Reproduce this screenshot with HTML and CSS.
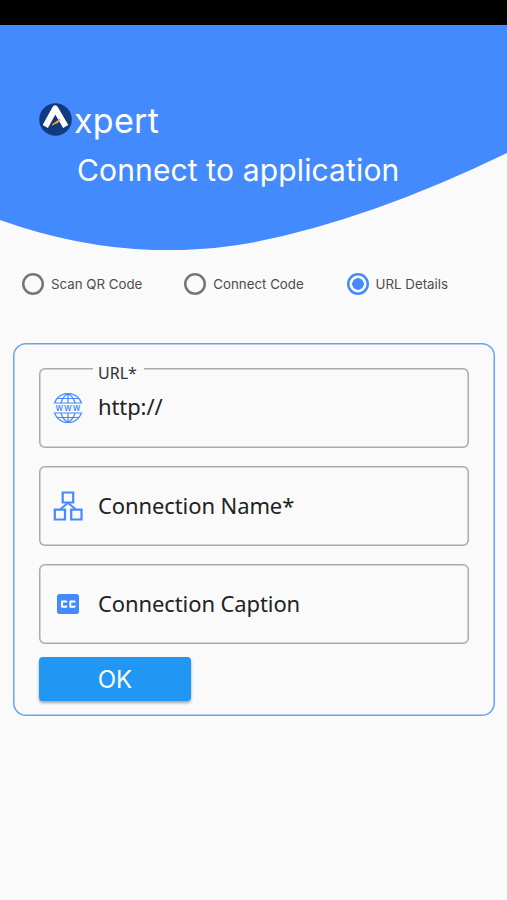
FILE: index.html
```
<!DOCTYPE html>
<html lang="en">

<head>
    <meta charset="UTF-8">
    <meta name="viewport" content="width=device-width, initial-scale=1.0">
    <title>Axpert</title>
    <link rel="stylesheet" href="styles.css">
</head>

<body>
    <div class="status-bar"></div>
    <header class="header">
        <svg class="wave" viewBox="0 0 507 225" preserveAspectRatio="none">
            <path d="M0 0V195Q127 240.500 253 217.500Q370 194.500 507 128V0Z" fill="#448aff" />
        </svg>
        <div class="brand">
            <svg class="logo" viewBox="0 0 33 33">
                <circle cx="16.500" cy="16.500" r="16.300" fill="#123a80" />
                <path d="M6.300 23.500L16.200 5.500L26.700 23.500" fill="none" stroke="#fff" stroke-width="6" stroke-linejoin="round" />
                <path d="M13 22L21 16L19 19.500Z" fill="#f5a623" stroke="#f5a623" />
            </svg>
            <span class="brand-name">xpert</span>
        </div>
        <h1 class="title">Connect to application</h1>
    </header>

    <div class="options">
        <label class="option"><input type="radio" name="mode"><span>Scan QR Code</span></label>
        <label class="option"><input type="radio" name="mode"><span>Connect Code</span></label>
        <label class="option"><input type="radio" name="mode" checked><span>URL Details</span></label>
    </div>

    <form class="card">
        <fieldset class="field field-url">
            <legend>URL*</legend>
            <svg class="icon" viewBox="0 0 30 30" fill="none" stroke="#448aff" stroke-width="1.200">
                <path d="M1.500 10A14.300 14.300 0 0 1 28.500 10ZM1.500 20A14.300 14.300 0 0 0 28.500 20Z" />
                <path d="M15 .7V10M15 20V29.300M8 10Q10 3 15 .7Q20 3 22 10M8 20Q10 27 15 29.300Q20 27 22 20M5 5.500H25M5 24.500H25" />
                <text class="icon-text" x="15.300" y="18" text-anchor="middle">WWW</text>
            </svg>
            <input type="text" value="http://" aria-label="URL">
        </fieldset>
        <div class="field">
            <svg class="icon" viewBox="0 0 30 30" fill="none" stroke="#448aff" stroke-width="2.200">
                <path d="M9.700 1.500H20.200V11.500H9.700ZM1.800 18.700H12V28.500H1.800ZM18.200 18.700H28.500V28.500H18.200Z" />
                <path d="M7.500 18L15 12L22.500 18" stroke-width="1.800" />
            </svg>
            <input type="text" placeholder="Connection Name*">
        </div>
        <div class="field">
            <svg class="icon" viewBox="0 0 30 30">
                <rect x="4" y="5" width="22" height="20" rx="2.500" fill="#448aff" />
                <path d="M13.200 13.600V12.500H9V17.700H13.200V16.600M21.500 13.600V12.500H17.300V17.700H21.500V16.600" fill="none" stroke="#fff" stroke-width="2" stroke-linejoin="round" />
            </svg>
            <input type="text" placeholder="Connection Caption">
        </div>
        <button type="button" class="ok-button">OK</button>
    </form>
</body>

</html>
```
FILE: styles.css
```
* {
    box-sizing: border-box;
}

body {
    margin: 0;
    min-height: 900px;
    background-color: #fafafa;
    font-family: Inter, sans-serif;
}

.status-bar {
    height: 25px;
    background-color: #000;
}

.header {
    position: relative;
    height: 225px;
    padding: 78px 0 0 39px;
    color: #fff;
}

/* Blue shape behind the heading text */
.wave {
    position: absolute;
    top: 0;
    left: 0;
    width: 100%;
    height: 100%;
    z-index: -1;
}

.brand {
    display: flex;
    height: 34px;
    align-items: center;
}

.logo {
    width: 33px;
    height: 33px;
    margin: 0 2px 1px 0;
}

.brand-name {
    padding-top: 2px;
    font-size: 34px;
    line-height: 34px;
    letter-spacing: 0.3px;
}

.title {
    margin: 14px 0 0 38px;
    font-size: 30px;
    font-weight: 400;
    line-height: 38px;
    letter-spacing: 0.14px;
    white-space: nowrap;
}

.options {
    display: flex;
    margin-top: 23px;
    padding-left: 22px;
}

.option {
    display: flex;
    flex: none;
    align-items: center;
    width: 162.300px;
    height: 22px;
    color: #4d4d4d;
    font-size: 13.300px;
    white-space: nowrap;
}

.option:last-child {
    width: auto;
}

.option input {
    appearance: none;
    flex: none;
    width: 22px;
    height: 22px;
    margin: 0 7px 0 0;
    border-radius: 50%;
    box-shadow: inset 0 0 0 2.500px #757575;
}

.option input:checked {
    box-shadow: inset 0 0 0 2.500px #448aff;
    background: radial-gradient(circle, #448aff 5.500px, transparent 6px);
}

.card {
    margin: 48px 12px 0 13px;
    height: 373px;
    padding: 25px 26px 0;
    border-radius: 13px;
    box-shadow: inset 0 0 0 1.500px #6ba1f2;
}

.field {
    display: flex;
    align-items: center;
    height: 80px;
    margin: 0 0 18px;
    padding: 0 14px;
    border: none;
    border-radius: 6px;
    box-shadow: inset 0 0 0 1.500px #aaa;
}

.field-url {
    position: relative;
}

.field-url legend {
    position: absolute;
    top: -5px;
    left: 54px;
    padding: 0 7px 0 5px;
    background-color: #fafafa;
    color: #333;
    font: 16px/20px "Noto Sans", sans-serif;
}

.icon {
    flex: none;
    width: 30px;
    height: 30px;
    margin-right: 15px;
}

.icon-text {
    fill: #448aff;
    stroke: none;
    font: 600 7.500px Inter, sans-serif;
    letter-spacing: 0.8px;
}

.field input {
    flex: 1;
    min-width: 0;
    padding: 0 0 2px;
    border: none;
    outline: none;
    background: none;
    color: #222;
    font: 22px/30px "Noto Sans", sans-serif;
    letter-spacing: -0.1px;
}

.field-url input {
    padding-bottom: 4px;
}

.field input::placeholder {
    color: #222;
    opacity: 1;
}

.ok-button {
    display: block;
    width: 152px;
    height: 44px;
    margin-top: -5px;
    padding: 2px 0 0;
    border: none;
    border-radius: 4px;
    background-color: #2196f3;
    box-shadow: 0 2px 3px rgba(0, 0, 0, 0.35);
    color: #fff;
    font: 24px/42px Inter, sans-serif;
}
```
